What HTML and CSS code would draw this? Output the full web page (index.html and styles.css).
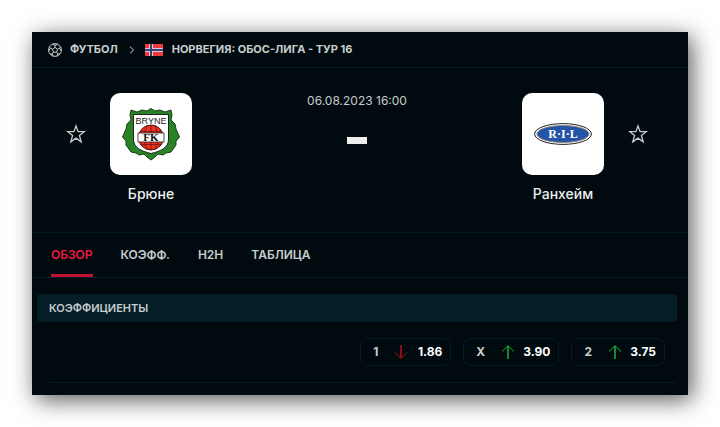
FILE: index.html
```html
<!DOCTYPE html>
<html lang="ru">
<head>
    <meta charset="UTF-8">
    <meta name="viewport" content="width=device-width, initial-scale=1.0">
    <title>Брюне - Ранхейм</title>
    <link rel="stylesheet" href="styles.css">
</head>
<body>
    <main class="panel">
        <nav class="breadcrumb">
            <svg class="ball" viewBox="0 0 14 14" fill="none" stroke="currentColor">
                <circle cx="7" cy="7" r="6.4"/>
                <path d="M7 4.4 9.5 6.2 8.6 9.2H5.4L4.5 6.2ZM7 4.4V2.3M9.5 6.2 11.6 5.3M8.6 9.2 9.9 11M5.4 9.2 4.1 11M4.5 6.2 2.4 5.3M4.3 1.3 7 2.3 9.7 1.3M12.6 3.8 11.6 5.3 13.3 7.9M12 10.8 9.9 11 8.8 13.1M5.2 13.1 4.1 11 2 10.8M.7 7.9 2.4 5.3 1.4 3.8"/>
            </svg>
            <a href="#">ФУТБОЛ</a>
            <svg class="chevron" viewBox="0 0 6 8" fill="none" stroke="currentColor">
                <path d="M1 .7 4.6 4 1 7.3"/>
            </svg>
            <svg class="flag" viewBox="0 0 18 12">
                <path fill="#ef3a3a" d="M0 0h18v12H0z"/>
                <path fill="#dfc3d0" d="M4 0h4v12H4zM0 4h18v4H0z"/>
                <path fill="#34407e" d="M5 0h2v12H5zM0 5h18v2H0z"/>
            </svg>
            <a href="#">НОРВЕГИЯ: ОБОС-ЛИГА - ТУР 16</a>
        </nav>

        <section class="match">
            <div class="team">
                <button class="star" type="button" aria-label="Добавить Брюне в избранное">
                    <svg viewBox="0 0 20 20" fill="none" stroke="currentColor" stroke-width="1.3">
                        <path d="M10 2 12.1 7.7H18.2L13.4 11.5 15.2 17.8 10 14.1 4.8 17.8 6.6 11.5 1.8 7.7H7.9Z"/>
                    </svg>
                </button>
                <div class="participant">
                    <div class="logo">
                        <svg viewBox="0 0 58 54" width="58" height="54">
                            <path fill="#278326" stroke="#183e18" d="M29 1.500 33 4 38 3 43 5 49 3 50 8 49 13 53 17 54 22 57.500 30 54 34 54 38 49 45 44 46 41 48 36 47 33 50 29 53 25 50 22 47 17 48 14 46 9 45 4 38 4 34 .5 30 4 22 5 17 9 13 8 8 9 3 15 5 20 3 25 4Z"/>
                            <path fill="#fff" stroke="#222" d="M11.500 7.500H46.500V33C46 41 39 44 29 46.500 19 44 12 41 11.500 33Z"/>
                            <circle cx="29" cy="30.500" r="12.500" fill="#ee3022" stroke="#40120d"/>
                            <path fill="none" stroke="#6d1810" stroke-width=".8" d="M29 18v25M25 19Q19 30.500 25 42M33 19Q39 30.500 33 42M18 24.500H40M18 37.500H40"/>
                            <path fill="#fff" d="M16 26H42V35H16Z"/>
                            <path fill="none" stroke="#222" stroke-width=".8" d="M16 26H42M16 35H42M16 26V35M42 26V35"/>
                            <text class="crest-name" x="29" y="17" text-anchor="middle">BRYNE</text>
                            <text class="crest-fk" x="29" y="34" text-anchor="middle">FK</text>
                        </svg>
                    </div>
                    <a class="team-name" href="#">Брюне</a>
                </div>
            </div>

            <div class="score">
                <time datetime="2023-08-06T16:00">06.08.2023 16:00</time>
                <div class="dash"></div>
            </div>

            <div class="team">
                <div class="participant">
                    <div class="logo">
                        <svg viewBox="0 0 58 22" width="58" height="22">
                            <ellipse cx="29" cy="11" rx="28.4" ry="10.4" fill="#fff" stroke="#222"/>
                            <ellipse cx="29" cy="11" rx="26" ry="8.5" fill="#2454a8" stroke="#8b8580"/>
                            <text class="crest-ril" x="29" y="15" text-anchor="middle">R·I·L</text>
                        </svg>
                    </div>
                    <a class="team-name" href="#">Ранхейм</a>
                </div>
                <button class="star" type="button" aria-label="Добавить Ранхейм в избранное">
                    <svg viewBox="0 0 20 20" fill="none" stroke="currentColor" stroke-width="1.3">
                        <path d="M10 2 12.1 7.7H18.2L13.4 11.5 15.2 17.8 10 14.1 4.8 17.8 6.6 11.5 1.8 7.7H7.9Z"/>
                    </svg>
                </button>
            </div>
        </section>

        <nav class="tabs">
            <a class="tab active" href="#">ОБЗОР</a>
            <a class="tab" href="#">КОЭФФ.</a>
            <a class="tab" href="#">H2H</a>
            <a class="tab" href="#">ТАБЛИЦА</a>
        </nav>

        <section class="odds">
            <h2 class="odds-title">КОЭФФИЦИЕНТЫ</h2>
            <div class="odds-row">
                <button class="odd" type="button">
                    <span class="odd-label">1</span>
                    <svg class="arrow down" viewBox="0 0 14 14" fill="none" stroke="currentColor">
                        <path stroke-width="1.5" d="M7 0V13"/><path d="M1 7.5 7 13.3 13 7.5"/>
                    </svg>
                    <span class="odd-value">1.86</span>
                </button>
                <button class="odd" type="button">
                    <span class="odd-label">X</span>
                    <svg class="arrow up" viewBox="0 0 14 14" fill="none" stroke="currentColor">
                        <path stroke-width="1.5" d="M7 1V14"/><path d="M1 6.5 7 .7 13 6.5"/>
                    </svg>
                    <span class="odd-value">3.90</span>
                </button>
                <button class="odd" type="button">
                    <span class="odd-label">2</span>
                    <svg class="arrow up" viewBox="0 0 14 14" fill="none" stroke="currentColor">
                        <path stroke-width="1.5" d="M7 1V14"/><path d="M1 6.5 7 .7 13 6.5"/>
                    </svg>
                    <span class="odd-value">3.75</span>
                </button>
            </div>
        </section>
    </main>
</body>
</html>
```
FILE: styles.css
```css
* {
    box-sizing: border-box;
    margin: 0;
    padding: 0;
}

body {
    padding: 32px;
    background-color: #fff;
    font-family: Inter, "Open Sans", sans-serif;
    color: #c8cdcd;
}

a {
    color: inherit;
    text-decoration: none;
}

button {
    background: none;
    border: none;
    color: inherit;
    font: inherit;
    cursor: pointer;
}

svg {
    display: block;
    flex: none;
}

.panel {
    background-color: #010a0f;
    padding-bottom: 12px;
    box-shadow: 4px 5px 22px rgba(0, 0, 0, 0.65);
}

.breadcrumb {
    display: flex;
    align-items: center;
    padding: 10px 16px;
    border-bottom: 1px solid #041c26;
    font-size: 11px;
    line-height: 15px;
    font-weight: 700;
}

.ball {
    width: 14px;
    height: 14px;
    margin-right: 8px;
}

.chevron {
    width: 6px;
    height: 8px;
    margin: 0 10px 0 11px;
}

.flag {
    width: 18px;
    height: 12px;
    margin-right: 9px;
}

.match {
    display: flex;
    justify-content: space-between;
    padding: 25px 40px 28px 34px;
    border-bottom: 1px solid #041c26;
}

.team {
    display: flex;
    align-items: flex-start;
    gap: 24px;
}

.star {
    width: 20px;
    height: 20px;
    margin-top: 31px;
}

.participant {
    display: flex;
    flex-direction: column;
    align-items: center;
    width: 82px;
}

.logo {
    display: flex;
    align-items: center;
    justify-content: center;
    width: 82px;
    height: 82px;
    border-radius: 10px;
    background-color: #fff;
}

.crest-name {
    font: 9px "Liberation Sans", sans-serif;
    fill: #222;
}

.crest-fk {
    font: bold 11px "Liberation Serif", serif;
    fill: #111;
}

.crest-ril {
    font: bold 12px "Liberation Serif", serif;
    fill: #fff;
}

.team-name {
    margin-top: 9px;
    font-size: 14px;
    line-height: 20px;
    font-weight: 500;
    color: #eee;
    white-space: nowrap;
}

.score {
    display: flex;
    flex-direction: column;
    align-items: center;
    font-size: 12px;
    line-height: 15px;
}

.dash {
    width: 20px;
    height: 7px;
    margin-top: 29px;
    background-color: #eee;
}

.tabs {
    display: flex;
    gap: 28px;
    padding: 0 19px;
    border-bottom: 1px solid #041c26;
}

.tab {
    padding: 14px 0 11px;
    border-bottom: 3px solid transparent;
    font-size: 12px;
    line-height: 16px;
    font-weight: 600;
}

.tab.active {
    color: #f01840;
    border-color: #c01034;
}

.odds {
    padding: 16px 11px 0 5px;
}

.odds-title {
    padding: 6px 12px;
    border-radius: 4px;
    background-color: #041e28;
    font-size: 11px;
    line-height: 16px;
    font-weight: 600;
}

.odds-row {
    display: flex;
    justify-content: flex-end;
    gap: 12px;
    margin-left: 12px;
    padding: 16px 12px;
    border-bottom: 1px solid #041c26;
}

.odd {
    display: flex;
    align-items: center;
    padding: 5px 8px 5px 12px;
    border: 1px solid #041c26;
    border-radius: 8px;
    font-size: 12px;
    line-height: 16px;
    font-weight: 700;
}

.arrow {
    width: 14px;
    height: 14px;
    margin: 0 8px 0 16px;
}

.arrow.down {
    color: #b5121b;
}

.arrow.up {
    color: #1db53c;
}

.odd-value {
    min-width: 26px;
    text-align: right;
    color: #fff;
}
```
